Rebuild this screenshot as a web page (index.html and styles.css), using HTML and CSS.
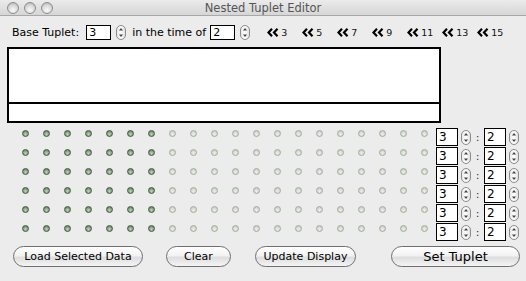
FILE: index.html
```html
<!DOCTYPE html>
<html lang="en">
<head>
  <meta charset="UTF-8" />
  <title>Nested Tuplet Editor</title>
  <link rel="stylesheet" href="styles.css">
</head>
<body>
  <div class="titlebar">
    <div class="lights">
      <span class="light"></span><span class="light"></span><span class="light"></span>
    </div>
    <div class="title">Nested Tuplet Editor</div>
    <div></div>
  </div>

  <div class="top-row">
    <span class="label">Base Tuplet:</span>
    <input class="num" type="text" value="3" />
    <span class="spin"></span>
    <span class="label label-time">in the time of</span>
    <input class="num" type="text" value="2" />
    <span class="spin"></span>
    <div class="presets">
      <span class="preset"><i class="chev"></i>3</span>
      <span class="preset"><i class="chev"></i>5</span>
      <span class="preset"><i class="chev"></i>7</span>
      <span class="preset"><i class="chev"></i>9</span>
      <span class="preset"><i class="chev"></i>11</span>
      <span class="preset"><i class="chev"></i>13</span>
      <span class="preset"><i class="chev"></i>15</span>
    </div>
  </div>

  <div class="display">
    <div class="display-main"></div>
    <div class="display-foot"></div>
  </div>

  <div class="rows" id="rows"></div>

  <div class="buttons">
    <button class="pill btn-load">Load Selected Data</button>
    <button class="pill btn-clear">Clear</button>
    <button class="pill btn-update">Update Display</button>
    <button class="pill btn-set">Set Tuplet</button>
  </div>

  <script>
    const ROWS = 6;
    const COLS = 20;
    const ACTIVE = 7;

    const spinSvg = '<svg width="10" height="15" viewBox="0 0 10 15">' +
      '<defs><linearGradient id="g" x1="0" y1="0" x2="1" y2="0">' +
      '<stop offset="0" stop-color="#e6e6e6"/><stop offset="0.5" stop-color="#ffffff"/><stop offset="1" stop-color="#dcdcdc"/>' +
      '</linearGradient></defs>' +
      '<rect x="0.5" y="0.5" width="9" height="14" rx="4.5" fill="url(#g)" stroke="#8c8c8c"/>' +
      '<path d="M5 3 L7 5.5 L3 5.5 Z" fill="#444"/>' +
      '<path d="M5 12 L7 9.5 L3 9.5 Z" fill="#444"/>' +
      '</svg>';

    const chevSvg = '<svg width="12" height="9" viewBox="0 0 12 9">' +
      '<path d="M5 0.8 L1.5 4.5 L5 8.2 M10.5 0.8 L7 4.5 L10.5 8.2" fill="none" stroke="#000" stroke-width="2.2"/>' +
      '</svg>';

    document.querySelectorAll('.spin').forEach(s => s.innerHTML = spinSvg);
    document.querySelectorAll('.chev').forEach(s => s.innerHTML = chevSvg);

    const rows = document.getElementById('rows');
    for (let r = 0; r < ROWS; r++) {
      let dots = '';
      for (let c = 0; c < COLS; c++) {
        dots += `<span class="dot ${c < ACTIVE ? 'on' : 'off'}"></span>`;
      }
      rows.innerHTML += `
        <div class="row">
          <div class="dots">${dots}</div>
          <input class="num small" type="text" value="3" />
          <span class="spin">${spinSvg}</span>
          <span class="colon">:</span>
          <input class="num small" type="text" value="2" />
          <span class="spin">${spinSvg}</span>
        </div>`;
    }
  </script>
</body>
</html>
```

FILE: styles.css
```css
body {
  margin: 0;
  background: #ececec;
  font-family: "DejaVu Sans", Verdana, sans-serif;
  font-size: 11px;
  color: #000;
  width: 526px;
  height: 281px;
  overflow: hidden;
}

.titlebar {
  display: grid;
  grid-template-columns: 1fr auto 1fr;
  align-items: center;
  height: 15px;
  background: linear-gradient(#ebebeb, #d6d6d6);
  border-bottom: 1px solid #a8a8a8;
}

.lights {
  display: flex;
  gap: 5px;
  padding-left: 7px;
}

.light {
  width: 10px;
  height: 10px;
  border-radius: 50%;
  border: 1px solid #8e8e8e;
  background: radial-gradient(circle at 50% 70%, #fafafa 0%, #d8d8d8 55%, #a9a9a9 100%);
}

.title {
  font-size: 11.5px;
  color: #555;
  padding-top: 1px;
}

.top-row {
  display: flex;
  align-items: center;
  height: 15px;
  margin-top: 9px;
  padding-left: 12px;
}

.label-time {
  margin-left: 6px;
}

.num {
  box-sizing: border-box;
  width: 25px;
  height: 15px;
  margin: 0 5px 0 7px;
  padding: 0 0 0 2px;
  border: 1px solid #000;
  font-family: inherit;
  font-size: 11px;
  line-height: 13px;
  background: #fff;
}

.label-time + .num {
  margin-left: 4px;
}

.spin {
  display: inline-flex;
  width: 10px;
  height: 15px;
}

.presets {
  display: flex;
  margin-left: 17px;
}

.preset {
  display: flex;
  align-items: center;
  width: 35px;
  font-size: 9.5px;
  color: #111;
}

.chev {
  display: inline-flex;
  margin-right: 2px;
}

.display {
  width: 434px;
  height: 76px;
  box-sizing: border-box;
  margin: 7px 0 0 7px;
  border: 2px solid #000;
  background: #fff;
  display: flex;
  flex-direction: column;
}

.display-main {
  height: 53px;
  border-bottom: 2px solid #000;
}

.rows {
  display: flex;
  flex-direction: column;
  gap: 1px;
  margin-top: 5px;
}

.row {
  display: flex;
  align-items: center;
  height: 18px;
}

.dots {
  display: grid;
  grid-template-columns: repeat(20, 7px);
  column-gap: 14px;
  margin-left: 22px;
  margin-right: 8px;
  align-self: flex-start;
  margin-top: 2px;
}

.dot {
  width: 7px;
  height: 7px;
  border-radius: 50%;
  box-sizing: border-box;
}

.dot.on {
  border: 1px solid #435743;
  background: radial-gradient(circle at 50% 65%, #c3d7bf 0%, #84a07f 55%, #587055 100%);
}

.dot.off {
  border: 1px solid #a3aba1;
  background: radial-gradient(circle at 50% 65%, #eef2ec 0%, #d2dacf 55%, #bcc4ba 100%);
}

.num.small {
  width: 22px;
  height: 18px;
  margin: 0 3px 0 0;
  font-size: 12px;
  line-height: 16px;
}

.colon {
  width: 13px;
  text-align: center;
  font-size: 11px;
  color: #333;
}

.buttons {
  display: flex;
  align-items: center;
  margin-top: 5px;
  padding-left: 13px;
}

.pill {
  box-sizing: border-box;
  height: 21px;
  padding: 0;
  border: 1px solid #6f6f6f;
  border-radius: 11px;
  background: linear-gradient(#ffffff 0%, #f2f2f2 45%, #dedede 55%, #f4f4f4 100%);
  font-family: inherit;
  font-size: 11px;
  color: #000;
}

.btn-load {
  width: 130px;
}

.btn-clear {
  width: 65px;
  margin-left: 23px;
}

.btn-update {
  width: 101px;
  margin-left: 24px;
}

.btn-set {
  width: 129px;
  margin-left: 35px;
  font-size: 13px;
}
```
